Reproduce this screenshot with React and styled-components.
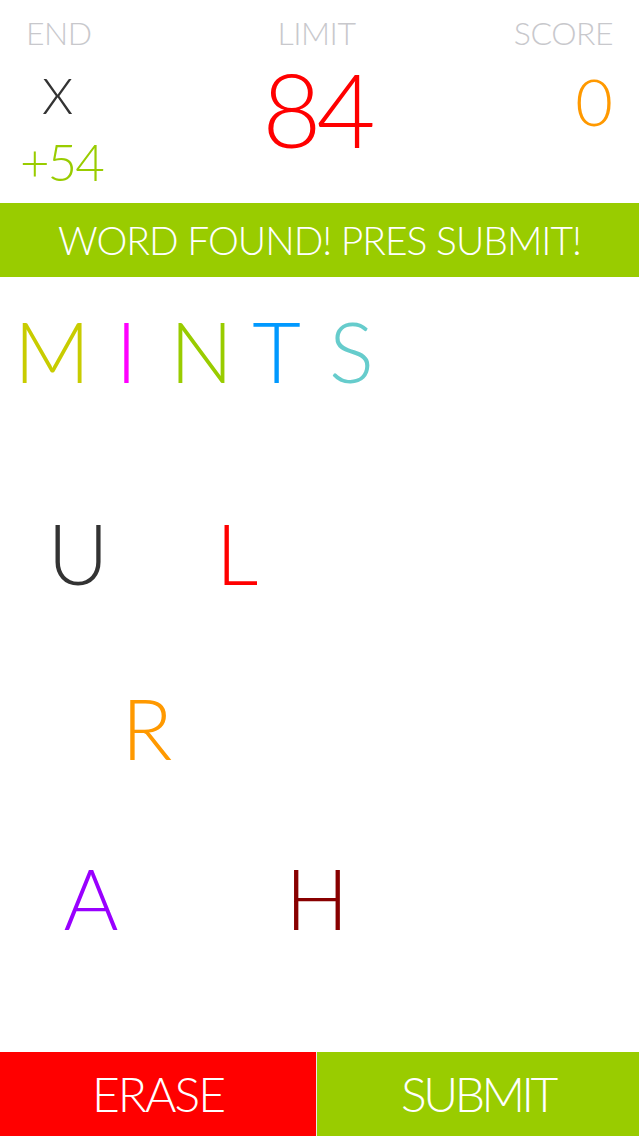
import React from 'react'
import styled, { createGlobalStyle } from 'styled-components'

const GlobalStyle = createGlobalStyle`
    html, body {
        margin: 0;
        padding: 0;
        background: #ffffff;
    }
    body {
        font-family: "Lato", "Liberation Sans", sans-serif;
        font-weight: 300;
    }
`

const word = [
    { ch: 'M', color: '#c8cc00' },
    { ch: 'I', color: '#ff00ff' },
    { ch: 'N', color: '#99cc00' },
    { ch: 'T', color: '#0099ff' },
    { ch: 'S', color: '#66cccc' },
]

// letter centres on the board (board starts under the word row)
const tiles = [
    { ch: 'U', color: '#333333', x: 78, y: 160 },
    { ch: 'L', color: '#ff0000', x: 237, y: 160 },
    { ch: 'R', color: '#ff9900', x: 147, y: 335 },
    { ch: 'A', color: '#9900ff', x: 91, y: 505 },
    { ch: 'H', color: '#880000', x: 317, y: 505 },
]

const App = () => {
    return (
        <Screen>
            <GlobalStyle />
            <Header>
                <Column align="flex-start">
                    <Label indent={6}>END</Label>
                    <EndMark>X</EndMark>
                    <Bonus>+54</Bonus>
                </Column>
                <Column align="center">
                    <Label>LIMIT</Label>
                    <Limit>84</Limit>
                </Column>
                <Column align="flex-end">
                    <Label>SCORE</Label>
                    <Score>0</Score>
                </Column>
            </Header>
            <Banner>WORD FOUND! PRES SUBMIT!</Banner>
            <Main>
                <WordRow>
                    {word.map((l, i) => (
                        <WordLetter key={i} color={l.color}>{l.ch}</WordLetter>
                    ))}
                </WordRow>
                <Board>
                    {tiles.map((t, i) => (
                        <Tile key={i} color={t.color} x={t.x} y={t.y}>{t.ch}</Tile>
                    ))}
                </Board>
            </Main>
            <Footer>
                <ActionButton bg="#ff0000">ERASE</ActionButton>
                <ActionButton bg="#99cc00" tight>SUBMIT</ActionButton>
            </Footer>
        </Screen>
    )
}

export default App

const Screen = styled.div`
    width: 639px;
    height: 1136px;
    display: flex;
    flex-direction: column;
    overflow: hidden;
`

const Header = styled.div`
    height: 203px;
    display: grid;
    grid-template-columns: 1fr 1fr 1fr;
    padding: 0 26px 0 20px;
    box-sizing: border-box;
`

const Column = styled.div`
    display: flex;
    flex-direction: column;
    align-items: ${p => p.align};
`

const Label = styled.div`
    margin-top: 16px;
    margin-left: ${p => p.indent || 0}px;
    font-size: 32px;
    line-height: 34px;
    color: #c8c8cc;
    letter-spacing: -0.5px;
`

const EndMark = styled.div`
    margin-left: 22px;
    margin-top: 20px;
    font-size: 50px;
    line-height: 50px;
    color: #333333;
`

const Bonus = styled.div`
    margin-top: 15px;
    font-size: 51px;
    line-height: 54px;
    color: #99cc00;
    letter-spacing: -2px;
`

const Limit = styled.div`
    margin-top: 19px;
    font-size: 102px;
    line-height: 80px;
    color: #ff0000;
    letter-spacing: -5px;
`

const Score = styled.div`
    margin-top: 18px;
    font-size: 65px;
    line-height: 66px;
    color: #ff9900;
`

const Banner = styled.div`
    height: 74px;
    background: #99cc00;
    color: #ffffff;
    font-size: 39px;
    line-height: 74px;
    text-align: center;
    letter-spacing: -1px;
`

const Main = styled.div`
    flex: 1;
    display: flex;
    flex-direction: column;
`

const WordRow = styled.div`
    display: flex;
    padding: 32px 0 0 14px;
`

const WordLetter = styled.div`
    width: 75px;
    text-align: center;
    font-size: 84px;
    line-height: 84px;
    color: ${p => p.color};
`

const Board = styled.div`
    position: relative;
    flex: 1;
`

const Tile = styled.div`
    position: absolute;
    left: ${p => p.x}px;
    top: ${p => p.y}px;
    transform: translate(-50%, -50%);
    font-size: 84px;
    line-height: 84px;
    color: ${p => p.color};
`

const Footer = styled.div`
    height: 84px;
    display: grid;
    grid-template-columns: 316px 1fr;
    gap: 1px;
    background: #e8e8e8;
`

const ActionButton = styled.div`
    background: ${p => p.bg};
    color: #ffffff;
    font-size: 48px;
    line-height: 84px;
    text-align: center;
    letter-spacing: ${p => (p.tight ? -3.5 : -2)}px;
`
